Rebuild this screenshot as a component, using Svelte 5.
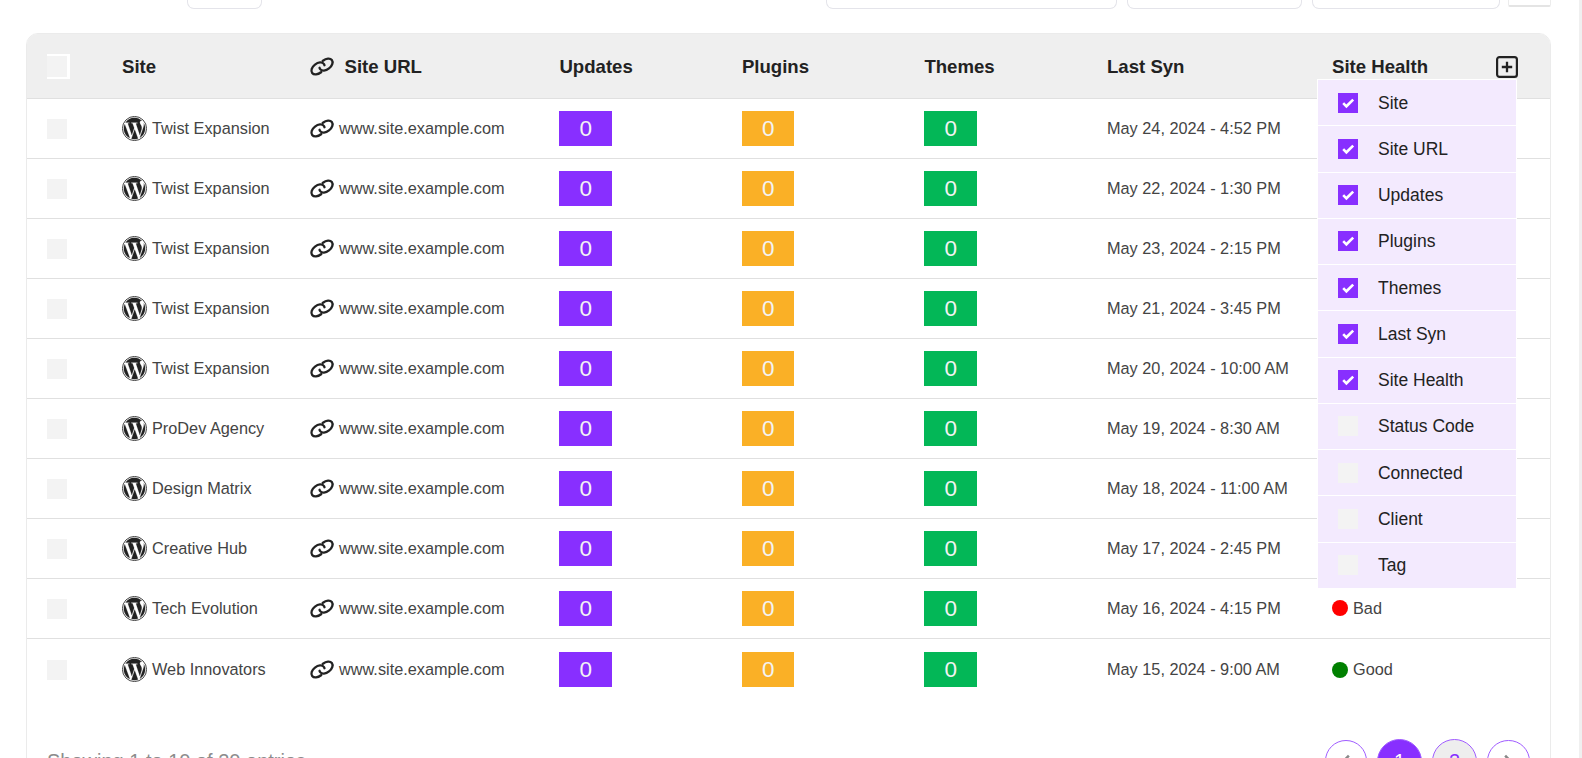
<script>
  const urls = 'www.site.example.com';
  const rows = [
    ['Twist Expansion', 'May 24, 2024 - 4:52 PM', 'Good'],
    ['Twist Expansion', 'May 22, 2024 - 1:30 PM', 'Good'],
    ['Twist Expansion', 'May 23, 2024 - 2:15 PM', 'Good'],
    ['Twist Expansion', 'May 21, 2024 - 3:45 PM', 'Good'],
    ['Twist Expansion', 'May 20, 2024 - 10:00 AM', 'Good'],
    ['ProDev Agency', 'May 19, 2024 - 8:30 AM', 'Good'],
    ['Design Matrix', 'May 18, 2024 - 11:00 AM', 'Good'],
    ['Creative Hub', 'May 17, 2024 - 2:45 PM', 'Good'],
    ['Tech Evolution', 'May 16, 2024 - 4:15 PM', 'Bad'],
    ['Web Innovators', 'May 15, 2024 - 9:00 AM', 'Good']
  ].map(([site, synced, health], i) => ({ site, synced, health, covered: i < 8 }));

  let columns = $state([
    { label: 'Site', on: true },
    { label: 'Site URL', on: true },
    { label: 'Updates', on: true },
    { label: 'Plugins', on: true },
    { label: 'Themes', on: true },
    { label: 'Last Syn', on: true },
    { label: 'Site Health', on: true },
    { label: 'Status Code', on: false },
    { label: 'Connected', on: false },
    { label: 'Client', on: false },
    { label: 'Tag', on: false }
  ]);
</script>

{#snippet linkIcon()}
  <svg class="link" viewBox="0 0 24 19" fill="none" stroke="currentColor" stroke-width="2.3" stroke-linecap="round">
    <ellipse cx="8" cy="11.4" rx="7.4" ry="4.9" transform="rotate(-38 8 11.4)" pathLength="100" stroke-dasharray="80 20" stroke-dashoffset="-24" />
    <ellipse cx="16" cy="7.6" rx="7.4" ry="4.9" transform="rotate(-38 16 7.6)" pathLength="100" stroke-dasharray="80 20" stroke-dashoffset="-74" />
  </svg>
{/snippet}

{#snippet wordpressIcon()}
  <svg class="wp" viewBox="0 0 24 24"><path fill="currentColor" stroke="currentColor" stroke-width=".2" d="M21.469 6.825c.84 1.537 1.318 3.3 1.318 5.175 0 3.979-2.156 7.456-5.363 9.325l3.295-9.527c.615-1.54.82-2.771.82-3.864 0-.405-.026-.78-.07-1.11m-7.981.105c.647-.03 1.232-.105 1.232-.105.582-.075.514-.93-.067-.899 0 0-1.755.135-2.88.135-1.064 0-2.85-.15-2.85-.15-.585-.03-.661.855-.075.885 0 0 .54.061 1.125.09l1.68 4.605-2.37 7.08L5.354 6.9c.649-.03 1.234-.1 1.234-.1.585-.075.516-.93-.065-.896 0 0-1.746.138-2.874.138-.2 0-.438-.008-.69-.015C4.911 3.15 8.235 1.215 12 1.215c2.809 0 5.365 1.072 7.286 2.833-.046-.003-.091-.009-.141-.009-1.06 0-1.812.923-1.812 1.914 0 .89.513 1.643 1.06 2.531.411.72.89 1.643.89 2.977 0 .915-.354 1.994-.821 3.479l-1.075 3.585-3.9-11.61.001.014zM12 22.784c-1.059 0-2.081-.153-3.048-.437l3.237-9.406 3.315 9.087c.024.053.05.101.078.149-1.12.393-2.325.609-3.582.609M1.211 12c0-1.564.336-3.05.935-4.39L7.29 21.709C3.694 19.96 1.212 16.271 1.211 12" transform="translate(.6 .6) scale(.95)" /><circle cx="12" cy="12" r="11.6" fill="none" stroke="currentColor" stroke-width=".8" /></svg>
{/snippet}

<div class="page">
  <div class="toolbar">
    <div class="field entries"></div>
    <div class="filters">
      <div class="field search"></div>
      <div class="field pick"></div>
      <div class="field status"></div>
      <div class="tool"></div>
    </div>
  </div>

  <div class="card">
    <div class="row head">
      <div><span class="allbox"><i></i></span></div>
      <div><span class="th">Site</span></div>
      <div>{@render linkIcon()}<span class="th urlhead">Site URL</span></div>
      <div><span class="th">Updates</span></div>
      <div><span class="th">Plugins</span></div>
      <div><span class="th">Themes</span></div>
      <div><span class="th">Last Syn</span></div>
      <div class="last">
        <span class="th">Site Health</span>
        <svg class="plus" viewBox="0 0 22 22" fill="none" stroke="currentColor">
          <rect x="1.1" y="1.1" width="19.8" height="19.8" rx="2.4" stroke-width="2.2" />
          <path d="M11 5.8v10.4M5.8 11h10.4" stroke-width="2.3" />
        </svg>
        <div class="menu">
          {#each columns as col}
            <button class="item" onclick={() => (col.on = !col.on)}>
              <span class="tick" class:on={col.on}>
                {#if col.on}
                  <svg viewBox="0 0 20 20"><path d="M5.2 10.1l3.2 3.2 6.8-6.7" fill="none" stroke="#fff" stroke-width="2.6" /></svg>
                {/if}
              </span>
              <span class="lbl">{col.label}</span>
            </button>
          {/each}
        </div>
      </div>
    </div>

    {#each rows as row}
      <div class="row body">
        <div><span class="box"></span></div>
        <div>{@render wordpressIcon()}<span class="txt name">{row.site}</span></div>
        <div>{@render linkIcon()}<span class="txt url">{urls}</span></div>
        <div><span class="badge violet">0</span></div>
        <div><span class="badge amber">0</span></div>
        <div><span class="badge green">0</span></div>
        <div><span class="txt">{row.synced}</span></div>
        <div>
          {#if !row.covered}
            <span class="txt health"><i class="dot" class:bad={row.health === 'Bad'}></i>{row.health}</span>
          {/if}
        </div>
      </div>
    {/each}

    <div class="foot">
      <span class="showing">Showing 1 to 10 of 20 entries</span>
      <div class="pages">
        <span class="pg arrow"><svg viewBox="0 0 14 14"><path d="M9.5 1.5L4 7l5.5 5.5" fill="none" stroke="#888" stroke-width="2.2" /></svg></span>
        <span class="pg num current">1</span>
        <span class="pg num">2</span>
        <span class="pg arrow"><svg viewBox="0 0 14 14"><path d="M4.5 1.5L10 7l-5.5 5.5" fill="none" stroke="#888" stroke-width="2.2" /></svg></span>
      </div>
    </div>
  </div>
</div>

<style>
  :global(body) {
    background: #fff;
    overflow: hidden;
  }
  .page {
    box-sizing: border-box;
    width: 1582px;
    height: 758px;
    overflow: hidden;
    padding: 0 28px 0 26px;
    border-right: 3px solid #f0f0f0;
    font-family: 'Liberation Sans', Arial, sans-serif;
    color: #222;
  }
  .page * {
    box-sizing: border-box;
  }
  .toolbar {
    display: flex;
    justify-content: space-between;
    height: 33px;
    padding-left: 161px;
  }
  .filters {
    display: flex;
  }
  .field {
    height: 9px;
    border: 1px solid #e4e4ea;
    border-top: 0;
    border-radius: 0 0 7px 7px;
  }
  .entries { width: 75px; }
  .search { width: 291px; margin-right: 10px; }
  .pick { width: 175px; margin-right: 10px; }
  .status { width: 188px; margin-right: 8px; }
  .tool {
    width: 43px;
    height: 7px;
    border: 1px solid #ececec;
    border-top: 0;
    border-bottom: 2px solid #e4e4e4;
    border-radius: 0 0 2px 2px;
  }
  .card {
    width: 1525px;
    height: 780px;
    border: 1px solid #ebebeb;
    border-radius: 12px 12px 0 0;
  }
  .row {
    display: grid;
    grid-template-columns: 75px 188px 249.4px 182.5px 182.5px 182.6px 225px 1fr;
    padding-left: 20px;
    height: 60px;
    border-bottom: 1px solid #e0e0e0;
  }
  .row > div {
    display: flex;
    align-items: center;
  }
  .head {
    height: 65px;
    background: #efefef;
    border-radius: 11px 11px 0 0;
    font-size: 18.6px;
    font-weight: 700;
  }
  .th {
    padding-top: 1px;
  }
  .body {
    padding-bottom: 1px;
    font-size: 16.3px;
    color: #444;
  }
  .row:nth-last-child(2) {
    padding: 1px 0 0 20px;
    border-bottom-color: transparent;
  }
  .row:nth-last-child(2) .txt {
    padding-top: 1px;
  }
  .allbox {
    width: 23px;
    height: 25px;
    padding: 2px 3px 2px 0;
    background: #fff;
  }
  .allbox i {
    display: block;
    height: 100%;
    background: #f3f3f3;
  }
  .box {
    width: 20px;
    height: 20px;
    margin-top: 1px;
    background: #f3f3f3;
  }
  .link {
    width: 24px;
    height: 19px;
    overflow: visible;
    color: #222;
  }
  .urlhead { margin-left: 10.5px; }
  .url { margin-left: 5px; }
  .wp {
    width: 25px;
    height: 25px;
    color: #222;
  }
  .name { margin-left: 5px; }
  .badge {
    width: 52.5px;
    height: 35px;
    margin-top: 1px;
    line-height: 35px;
    text-align: center;
    font-size: 22.5px;
    color: #f3f3f3;
  }
  .row:nth-last-child(2) .badge {
    margin-top: 0;
  }
  .violet { background: #882fff; }
  .amber { background: #fab026; }
  .green { background: #03b757; }
  .health {
    display: flex;
    align-items: center;
  }
  .dot {
    width: 16px;
    height: 16px;
    margin-right: 5px;
    border-radius: 50%;
    background: green;
  }
  .dot.bad { background: red; }
  .last {
    position: relative;
    justify-content: space-between;
    padding-right: 32px;
  }
  .plus {
    width: 22px;
    height: 22px;
    margin-top: 1px;
  }
  .menu {
    position: absolute;
    z-index: 2;
    top: 45px;
    left: -15px;
    width: 200px;
    border: 1px solid #fff;
    background: #fff;
  }
  .item {
    display: flex;
    align-items: center;
    width: 100%;
    height: 46.27px;
    padding: 0 0 0 20px;
    border: 0;
    border-bottom: 1px solid #fff;
    background: #f3eafe;
    font: 17.5px 'Liberation Sans', Arial, sans-serif;
    color: #222;
  }
  .lbl {
    padding-top: 1px;
  }
  .tick {
    width: 20px;
    height: 20px;
    margin-right: 20px;
    background: #f3f3f3;
  }
  .tick.on { background: #882fff; }
  .tick svg {
    display: block;
    width: 20px;
    height: 20px;
  }
  .foot {
    display: flex;
    align-items: center;
    justify-content: space-between;
    height: 45px;
    margin: 40px 20.5px 0 20px;
  }
  .showing {
    font-size: 20px;
    color: #8c8c8c;
  }
  .pages {
    display: flex;
    align-items: center;
    gap: 10px;
  }
  .pg {
    display: flex;
    align-items: center;
    justify-content: center;
    width: 45px;
    height: 45px;
    border: 1.5px solid #a05cff;
    border-radius: 50%;
    background: #eee;
    font-size: 20px;
    color: #882fff;
  }
  .pg.current {
    background: #882fff;
    color: #fff;
  }
  .pg.arrow {
    width: 42.5px;
    height: 42.5px;
    background: #fff;
  }
  .pg svg {
    width: 16px;
    height: 16px;
  }
</style>
